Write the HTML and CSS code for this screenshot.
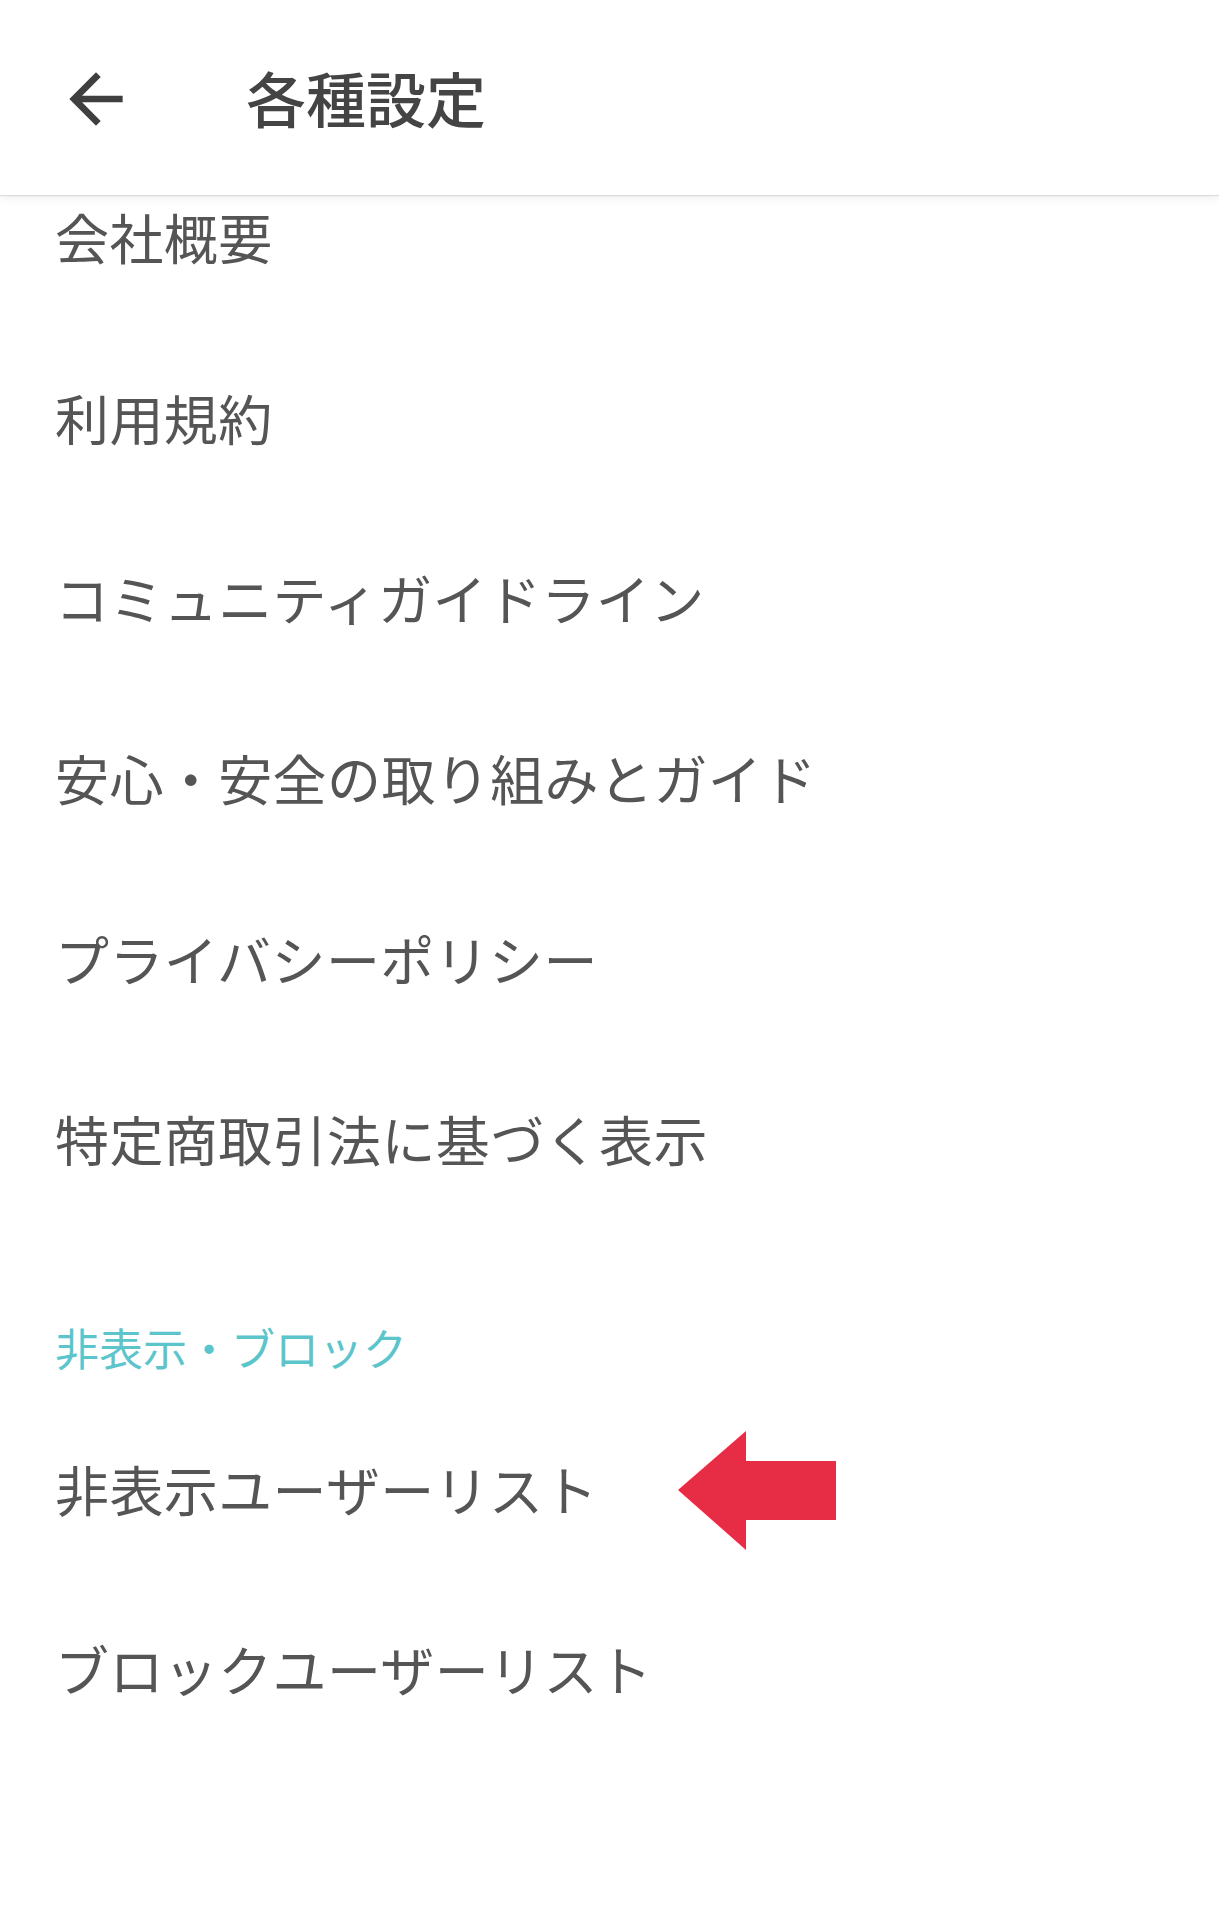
FILE: index.html
```html
<!DOCTYPE html>
<html lang="ja">
<head>
<meta charset="utf-8">
<title>各種設定</title>
<link rel="stylesheet" href="styles.css">
</head>
<body>
<div class="screen">
  <header class="appbar">
    <button class="back" aria-label="戻る">
      <svg class="back-icon" viewBox="0 0 24 24" width="80" height="80" aria-hidden="true">
        <path d="M20 11H7.83l5.59-5.59L12 4l-8 8 8 8 1.41-1.41L7.83 13H20v-2z" fill="currentColor"/>
      </svg>
    </button>
    <h1 class="title">各種設定</h1>
  </header>
  <main class="list">
    <div class="item"><span class="label">会社概要</span></div>
    <div class="item"><span class="label">利用規約</span></div>
    <div class="item"><span class="label">コミュニティガイドライン</span></div>
    <div class="item"><span class="label">安心・安全の取り組みとガイド</span></div>
    <div class="item"><span class="label">プライバシーポリシー</span></div>
    <div class="item"><span class="label">特定商取引法に基づく表示</span></div>
    <div class="section">非表示・ブロック</div>
    <div class="item item-marked">
      <span class="label">非表示ユーザーリスト</span>
      <svg class="pointer" viewBox="0 0 158 119" width="158" height="119" aria-hidden="true">
        <polygon points="0,59 68,0 68,30 158,30 158,89 68,89 68,119" fill="#e62d45"/>
      </svg>
    </div>
    <div class="item"><span class="label">ブロックユーザーリスト</span></div>
  </main>
</div>
</body>
</html>
```

FILE: styles.css
```css
* {
  box-sizing: border-box;
}

html, body {
  margin: 0;
  padding: 0;
  background: #ffffff;
}

body {
  font-family: "Noto Sans CJK JP", "Noto Sans", sans-serif;
  color: #585858;
}

.screen {
  width: 1219px;
  min-height: 1920px;
  background: #ffffff;
  overflow: hidden;
}

.appbar {
  position: relative;
  z-index: 2;
  height: 195px;
  background: #ffffff;
  display: flex;
  align-items: center;
  padding-left: 56px;
  box-shadow: 0 1px 1px rgba(0, 0, 0, 0.10), 0 3px 9px rgba(0, 0, 0, 0.07);
}

.back {
  width: 80px;
  height: 80px;
  padding: 0;
  margin: 0;
  border: none;
  background: transparent;
  color: #3f3f3f;
  display: flex;
  align-items: center;
  justify-content: center;
  position: relative;
  top: 1px;
}

.back-icon {
  display: block;
}

.title {
  margin: 0 0 0 110px;
  font-size: 60px;
  font-weight: 500;
  line-height: 1;
  color: #444444;
  letter-spacing: 0;
  padding-bottom: 2px;
}

.list {
  position: relative;
  z-index: 1;
  margin-top: -45px;
}

.item {
  position: relative;
  height: 180.4px;
  display: flex;
  align-items: center;
  padding-left: 55px;
}

.label {
  font-size: 54px;
  line-height: 1;
  color: #555555;
  letter-spacing: 0.4px;
  white-space: nowrap;
  padding-bottom: 6px;
}

.section {
  height: 169px;
  padding: 93px 0 0 55px;
  font-size: 44px;
  line-height: 1;
  color: #5cc5cc;
  white-space: nowrap;
}

.pointer {
  position: absolute;
  left: 678px;
  top: 30px;
  display: block;
}
```
